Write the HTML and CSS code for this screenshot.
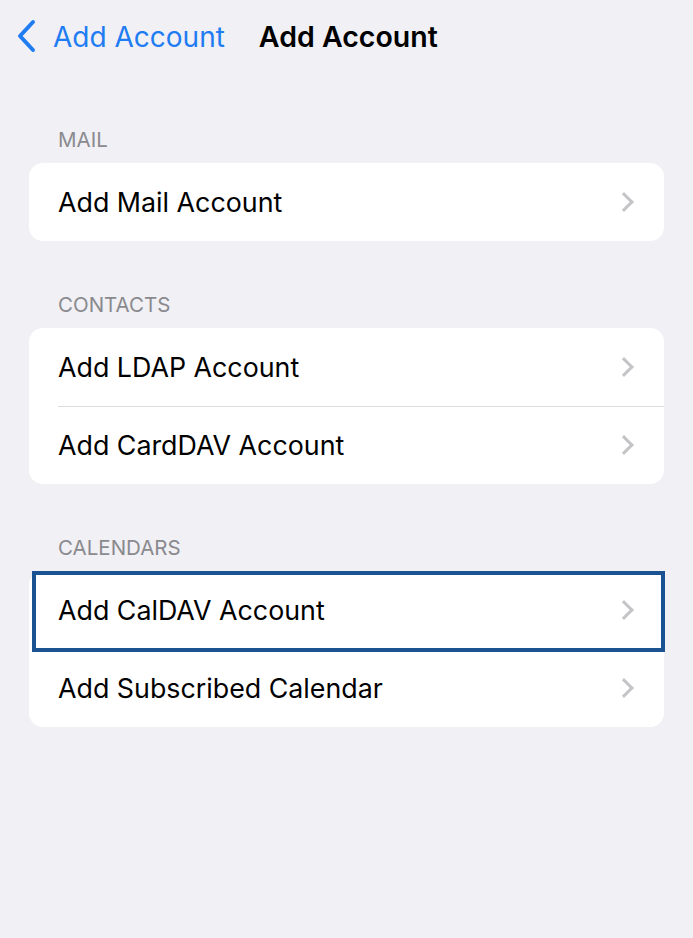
FILE: index.html
```html
<!DOCTYPE html>
<html lang="en">
<head>
  <meta charset="UTF-8">
  <meta name="viewport" content="width=device-width, initial-scale=1.0">
  <title>Add Account</title>
  <link rel="stylesheet" href="styles.css">
</head>
<body>
<div class="topbar">
  <a class="back" href="#">
    <svg width="24" height="34" viewBox="0 0 24 34"><path d="M19 3 L6 17 L19 31" fill="none" stroke="#1f7cf2" stroke-width="4" stroke-linecap="round" stroke-linejoin="round"/></svg>
    <span>Add Account</span>
  </a>
  <h1 class="title">Add Account</h1>
</div>

<div class="group">
  <div class="group-label">MAIL</div>
  <div class="card">
    <a class="row" href="#"><span>Add Mail Account</span><i class="chev"></i></a>
  </div>
</div>

<div class="group">
  <div class="group-label">CONTACTS</div>
  <div class="card">
    <a class="row" href="#"><span>Add LDAP Account</span><i class="chev"></i></a>
    <a class="row" href="#"><span>Add CardDAV Account</span><i class="chev"></i></a>
  </div>
</div>

<div class="group">
  <div class="group-label">CALENDARS</div>
  <div class="card">
    <a class="row marked" href="#"><span>Add CalDAV Account</span><i class="chev"></i></a>
    <a class="row" href="#"><span>Add Subscribed Calendar</span><i class="chev"></i></a>
  </div>
</div>
</body>
</html>
```

FILE: styles.css
```css
body {
  margin: 0;
  background: #f0f0f5;
  font-family: Inter, "Liberation Sans", sans-serif;
  color: #000;
}

.topbar {
  box-sizing: border-box;
  height: 76px;
  display: flex;
  align-items: center;
  padding: 0 0 4px 14px;
}

.back {
  display: flex;
  align-items: center;
  gap: 15px;
  color: #1f7cf2;
  text-decoration: none;
  font-size: 28px;
  margin-right: 34px;
}

.back span {
  padding-top: 2px;
}

.back svg {
  display: block;
}

.title {
  margin: 0;
  font-size: 28.5px;
  font-weight: 600;
}

.group {
  margin: 0 29px;
}

.group-label {
  margin-top: 52px;
  margin-bottom: 11px;
  padding-left: 29px;
  line-height: 24px;
  font-size: 20.5px;
  color: #8a8a8e;
}

.card {
  background: #fff;
  border-radius: 14px;
}

.row {
  position: relative;
  height: 78px;
  display: flex;
  align-items: center;
  justify-content: space-between;
  padding: 0 33px 0 29px;
  color: #000;
  text-decoration: none;
  font-size: 26.8px;
}

.row + .row::before {
  content: "";
  position: absolute;
  top: 0;
  left: 29px;
  right: 0;
  height: 1px;
  background: #dcdce0;
}

.chev {
  width: 11px;
  height: 11px;
  border-top: 3px solid #c4c4c7;
  border-right: 3px solid #c4c4c7;
  transform: rotate(45deg);
}

.marked::after {
  content: "";
  position: absolute;
  z-index: 1;
  top: 0;
  left: 3px;
  right: -1px;
  bottom: -3px;
  border: 4px solid #1b5292;
}
```
